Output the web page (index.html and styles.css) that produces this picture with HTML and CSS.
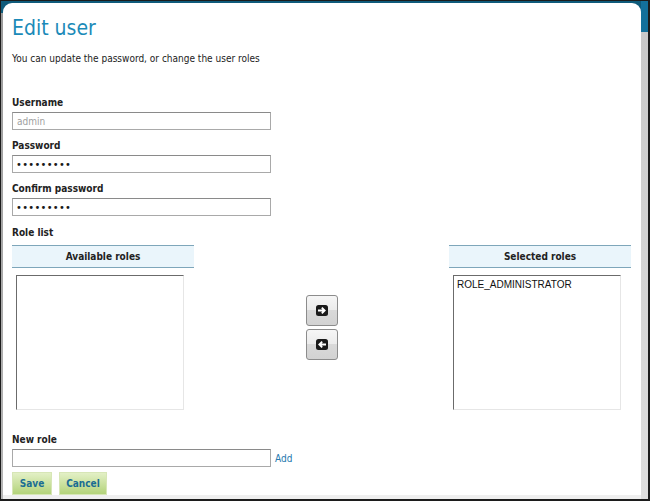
FILE: index.html
```html
<!DOCTYPE html>
<html>
<head>
<meta charset="utf-8">
<link rel="stylesheet" href="styles.css">
</head>
<body>
<div class="frame">
  <div class="side-left"></div>
  <main class="panel">
    <h1 class="title">Edit user</h1>
    <p class="intro">You can update the password, or change the user roles</p>

    <div class="field field-first">
      <label class="label">Username</label>
      <input class="input input-disabled" type="text" value="admin" disabled>
    </div>
    <div class="field">
      <label class="label">Password</label>
      <input class="input" type="password" value="secret123">
    </div>
    <div class="field">
      <label class="label">Confirm password</label>
      <input class="input" type="password" value="secret123">
    </div>

    <div class="label role-label">Role list</div>
    <div class="roles">
      <div class="role-col">
        <div class="role-head">Available roles</div>
        <div class="listbox"></div>
      </div>
      <div class="movers">
        <button class="mover" type="button" aria-label="Add role">
          <svg width="12" height="11" viewBox="0 0 12 11"><rect x="0" y="0" width="12" height="11" rx="2.5" fill="#1a1a1a"/><path d="M2 5.5h6.5M5.8 2.6L8.7 5.5 5.8 8.4" stroke="#fff" stroke-width="1.8" fill="none"/></svg>
        </button>
        <button class="mover" type="button" aria-label="Remove role">
          <svg width="12" height="11" viewBox="0 0 12 11"><rect x="0" y="0" width="12" height="11" rx="2.5" fill="#1a1a1a"/><path d="M10 5.5H3.5M6.2 2.6L3.3 5.5 6.2 8.4" stroke="#fff" stroke-width="1.8" fill="none"/></svg>
        </button>
      </div>
      <div class="role-col">
        <div class="role-head">Selected roles</div>
        <div class="listbox"><div class="option">ROLE_ADMINISTRATOR</div></div>
      </div>
    </div>

    <div class="field new-role">
      <label class="label">New role</label>
      <div class="add-row">
        <input class="input" type="text">
        <a class="add-link" href="#">Add</a>
      </div>
    </div>

    <div class="actions">
      <button class="btn btn-save" type="button">Save</button>
      <button class="btn btn-cancel" type="button">Cancel</button>
    </div>
  </main>
  <div class="side-right"></div>
</div>
</body>
</html>
```
FILE: styles.css
```css
* { box-sizing: border-box; }
html, body { margin: 0; padding: 0; background: #fff; }
body { font-family: "DejaVu Sans Condensed", "DejaVu Sans", sans-serif; }

.frame {
  width: 650px;
  height: 501px;
  border: 1px solid #1c1c1c;
  border-right-width: 2px;
  border-bottom-width: 2px;
  background: #0f5b7b;
  display: flex;
  overflow: hidden;
}
.side-left {
  width: 2px;
  background: linear-gradient(to bottom, #0f5b7b 0, #0f5b7b 12px, #9a9a9a 12px, #b5b5b5 100%);
}
.side-right {
  width: 7px;
  background: linear-gradient(to bottom, #13709b 0, #13709b 31px, #c9c9c9 31px, #dedede 100%);
}
.panel {
  flex: 1;
  margin-top: 2px;
  background: #fff;
  border-radius: 9px 9px 0 0;
  padding: 11px 0 0 9px;
  border-bottom: 4px solid #efefef;
}

.title {
  margin: 0;
  font-weight: normal;
  font-size: 21px;
  line-height: 28px;
  color: #1b8ab8;
}
.intro {
  margin: 10px 0 0;
  font-size: 10px;
  line-height: 14px;
  color: #222;
}
.field { display: flex; flex-direction: column; }
.field-first { margin-top: 30px; }
.field + .field { margin-top: 9px; }
.label {
  font-size: 10px;
  font-weight: bold;
  line-height: 14px;
  color: #222;
}
.input {
  margin-top: 2px;
  width: 259px;
  height: 18px;
  border: 1px solid #a9a9a9;
  border-top-color: #8a8a8a;
  padding: 0 3px;
  font-family: "DejaVu Sans Condensed", "DejaVu Sans", sans-serif;
  font-size: 10px;
  color: #222;
  background: #fff;
  outline: none;
}
.input-disabled { color: #a0a0a0; padding: 0 4px; }
.input[type=password] { font-size: 11px; letter-spacing: 0.3px; color: #1a1a1a; }

.role-label { margin-top: 10px; }
.roles {
  margin-top: 5px;
  display: flex;
  justify-content: space-between;
  padding-right: 10px;
}
.role-col { width: 182px; }
.role-head {
  height: 23px;
  border-top: 1px solid #7ea6ba;
  border-bottom: 1px solid #7ea6ba;
  background: #eaf5fb;
  font-size: 10px;
  font-weight: bold;
  line-height: 21px;
  text-align: center;
  color: #222;
}
.listbox {
  margin: 7px 0 0 4px;
  width: 168px;
  height: 135px;
  border: 1px solid #e6e6e6;
  border-left-color: #6b6b6b;
  border-top-color: #6b6b6b;
  padding: 3px 3px;
}
.option {
  font-family: "Liberation Sans", Arial, sans-serif;
  font-size: 10px;
  line-height: 12px;
  color: #111;
}
.movers {
  display: flex;
  flex-direction: column;
  gap: 3px;
  padding-top: 50px;
}
.mover {
  width: 32px;
  height: 31px;
  border: 1px solid #8c8c8c;
  border-radius: 3px;
  background: linear-gradient(to bottom, #f6f6f6 0, #ebebeb 50%, #d9d9d9 50%, #d2d2d2 100%);
  display: flex;
  align-items: center;
  justify-content: center;
  padding: 0;
}

.new-role { margin-top: 23px; }
.add-row { display: flex; align-items: center; gap: 4px; }
.add-link {
  margin-top: 3px;
  font-size: 10px;
  line-height: 12px;
  color: #2479ae;
  text-decoration: none;
}
.actions { margin-top: 5px; display: flex; gap: 7px; }
.btn {
  height: 23px;
  padding: 0;
  border: 1px solid #d7e6b6;
  background: linear-gradient(to bottom, #e3f0c6, #b3d37a);
  font-family: "DejaVu Sans Condensed", "DejaVu Sans", sans-serif;
  font-size: 10px;
  font-weight: bold;
  color: #1a6c93;
  text-align: center;
}
.btn-save { width: 40px; }
.btn-cancel { width: 48px; }
```
